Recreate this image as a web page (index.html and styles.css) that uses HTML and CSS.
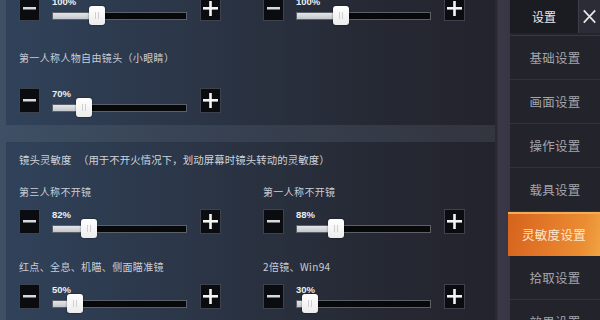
FILE: index.html
```html
<!DOCTYPE html>
<html lang="zh">
<head>
<meta charset="utf-8">
<title>设置</title>
<link rel="stylesheet" href="styles.css">
</head>
<body>
<div class="app">
  <main class="main">
    <section class="panel panel-top">
      <div class="grid grid-first">
        <div class="ctrl">
          <div class="btn"><svg viewBox="0 0 21 25"><rect x="4" y="11" width="13" height="2.5" fill="#d9dadc"/></svg></div>
          <div class="slider"><div class="pct">100%</div><div class="track"><div class="fill" style="width:33.3%"></div><div class="thumb" style="left:33.3%"></div></div></div>
          <div class="btn"><svg viewBox="0 0 21 25"><rect x="3" y="11" width="15" height="2.6" fill="#f4f4f4"/><rect x="9.2" y="5" width="2.6" height="15" fill="#f4f4f4"/></svg></div>
        </div>
        <div class="ctrl">
          <div class="btn"><svg viewBox="0 0 21 25"><rect x="4" y="11" width="13" height="2.5" fill="#d9dadc"/></svg></div>
          <div class="slider"><div class="pct">100%</div><div class="track"><div class="fill" style="width:33.3%"></div><div class="thumb" style="left:33.3%"></div></div></div>
          <div class="btn"><svg viewBox="0 0 21 25"><rect x="3" y="11" width="15" height="2.6" fill="#f4f4f4"/><rect x="9.2" y="5" width="2.6" height="15" fill="#f4f4f4"/></svg></div>
        </div>
      </div>
      <div class="title solo">第一人称人物自由镜头（小眼睛）</div>
      <div class="grid grid-solo">
        <div class="ctrl">
          <div class="btn"><svg viewBox="0 0 21 25"><rect x="4" y="11" width="13" height="2.5" fill="#d9dadc"/></svg></div>
          <div class="slider"><div class="pct">70%</div><div class="track"><div class="fill" style="width:23.3%"></div><div class="thumb" style="left:23.3%"></div></div></div>
          <div class="btn"><svg viewBox="0 0 21 25"><rect x="3" y="11" width="15" height="2.6" fill="#f4f4f4"/><rect x="9.2" y="5" width="2.6" height="15" fill="#f4f4f4"/></svg></div>
        </div>
      </div>
    </section>

    <section class="panel panel-bottom">
      <div class="head">镜头灵敏度 <span class="paren">（用于不开火情况下，划动屏幕时镜头转动的灵敏度）</span></div>
      <div class="grid grid-main">
        <div class="setting">
          <div class="title">第三人称不开镜</div>
          <div class="ctrl">
            <div class="btn"><svg viewBox="0 0 21 25"><rect x="4" y="11" width="13" height="2.5" fill="#d9dadc"/></svg></div>
            <div class="slider"><div class="pct">82%</div><div class="track"><div class="fill" style="width:27.3%"></div><div class="thumb" style="left:27.3%"></div></div></div>
            <div class="btn"><svg viewBox="0 0 21 25"><rect x="3" y="11" width="15" height="2.6" fill="#f4f4f4"/><rect x="9.2" y="5" width="2.6" height="15" fill="#f4f4f4"/></svg></div>
          </div>
        </div>
        <div class="setting">
          <div class="title">第一人称不开镜</div>
          <div class="ctrl">
            <div class="btn"><svg viewBox="0 0 21 25"><rect x="4" y="11" width="13" height="2.5" fill="#d9dadc"/></svg></div>
            <div class="slider"><div class="pct">88%</div><div class="track"><div class="fill" style="width:29.3%"></div><div class="thumb" style="left:29.3%"></div></div></div>
            <div class="btn"><svg viewBox="0 0 21 25"><rect x="3" y="11" width="15" height="2.6" fill="#f4f4f4"/><rect x="9.2" y="5" width="2.6" height="15" fill="#f4f4f4"/></svg></div>
          </div>
        </div>
        <div class="setting">
          <div class="title">红点、全息、机瞄、侧面瞄准镜</div>
          <div class="ctrl">
            <div class="btn"><svg viewBox="0 0 21 25"><rect x="4" y="11" width="13" height="2.5" fill="#d9dadc"/></svg></div>
            <div class="slider"><div class="pct">50%</div><div class="track"><div class="fill" style="width:16.7%"></div><div class="thumb" style="left:16.7%"></div></div></div>
            <div class="btn"><svg viewBox="0 0 21 25"><rect x="3" y="11" width="15" height="2.6" fill="#f4f4f4"/><rect x="9.2" y="5" width="2.6" height="15" fill="#f4f4f4"/></svg></div>
          </div>
        </div>
        <div class="setting">
          <div class="title">2倍镜、Win94</div>
          <div class="ctrl">
            <div class="btn"><svg viewBox="0 0 21 25"><rect x="4" y="11" width="13" height="2.5" fill="#d9dadc"/></svg></div>
            <div class="slider"><div class="pct">30%</div><div class="track"><div class="fill" style="width:10%"></div><div class="thumb" style="left:10%"></div></div></div>
            <div class="btn"><svg viewBox="0 0 21 25"><rect x="3" y="11" width="15" height="2.6" fill="#f4f4f4"/><rect x="9.2" y="5" width="2.6" height="15" fill="#f4f4f4"/></svg></div>
          </div>
        </div>
      </div>
    </section>
  </main>

  <div class="rail"></div>

  <aside class="sidebar">
    <div class="side-head">
      <div class="tab">设置</div>
      <div class="close"><svg viewBox="0 0 22 33"><path d="M5 10 L17 23 M17 10 L5 23" stroke="#e6e6e8" stroke-width="1.8" fill="none"/></svg></div>
    </div>
    <ul class="menu">
      <li class="item">基础设置</li>
      <li class="item">画面设置</li>
      <li class="item">操作设置</li>
      <li class="item">载具设置</li>
      <li class="item active">灵敏度设置</li>
      <li class="item">拾取设置</li>
      <li class="item">效果设置</li>
    </ul>
  </aside>
</div>
</body>
</html>
```

FILE: styles.css
```css
* { box-sizing: border-box; }

html, body {
  margin: 0;
  padding: 0;
  width: 600px;
  height: 320px;
  overflow: hidden;
  background: #24242c;
  font-family: "Noto Sans CJK SC", "Noto Sans", sans-serif;
}

.app {
  display: flex;
  width: 600px;
  height: 320px;
  overflow: hidden;
}

/* ---------- main settings column ---------- */
.main {
  width: 495px;
  flex: none;
  padding-left: 6px;
  display: flex;
  flex-direction: column;
  background: linear-gradient(90deg, #3e5064 0%, #374152 45%, #33353f 100%);
  overflow: hidden;
}

.panel {
  flex: none;
  padding-left: 13px;
  background:
    linear-gradient(90deg, #30425a 0%, #2b3546 40%, #262a35 72%, #23232c 100%);
}

.panel-top {
  height: 125px;
}

.panel-bottom {
  margin-top: 17px;
  flex: 1;
  padding-top: 11px;
}

.grid {
  display: grid;
  grid-template-columns: 202px 202px;
  column-gap: 42px;
}

.grid-first { margin-top: -4px; }
.grid-solo { margin-top: 23px; }
.grid-main { margin-top: 18px; row-gap: 26px; }

.title {
  font-size: 10px;
  line-height: 14px;
  letter-spacing: 0.35px;
  color: #c9ced6;
  margin-bottom: 10px;
  white-space: nowrap;
}

.title.solo {
  margin: 30px 0 0 0;
}

.head {
  font-size: 10.4px;
  line-height: 14px;
  letter-spacing: 0.1px;
  color: #cfd3da;
  white-space: nowrap;
}

.head .paren { margin-left: 4px; }

/* ---------- slider control ---------- */
.ctrl {
  display: flex;
  align-items: flex-start;
  height: 25px;
}

.btn {
  width: 21px;
  height: 25px;
  flex: none;
  background: #0b0c10;
  border: 1px solid #3d424c;
}

.btn svg {
  display: block;
  width: 100%;
  height: 100%;
  margin: -1px;
  width: 21px;
  height: 25px;
}

.slider {
  width: 135px;
  flex: none;
  margin: 0 13px 0 12px;
  display: flex;
  flex-direction: column;
}

.pct {
  font-family: "Liberation Sans", Arial, sans-serif;
  font-weight: bold;
  font-size: 9.5px;
  line-height: 11px;
  height: 11px;
  color: #eceef0;
}

.track {
  position: relative;
  margin-top: 5px;
  height: 8px;
  background: #07080a;
  border: 1px solid #5b6069;
}

.fill {
  height: 100%;
  background: linear-gradient(180deg, #e4e6e9 0%, #c3c6cb 100%);
}

.thumb {
  position: absolute;
  top: -7px;
  width: 16px;
  height: 19px;
  margin-left: -8px;
  background: linear-gradient(180deg, #ffffff 0%, #ececec 100%);
  border-radius: 3px;
  box-shadow: 0 0 2px rgba(0, 0, 0, 0.6);
}

.thumb::after {
  content: "";
  position: absolute;
  left: 6px;
  top: 6px;
  width: 2px;
  height: 7px;
  border-left: 1px solid #cfcfcf;
  border-right: 1px solid #cfcfcf;
}

/* ---------- rail ---------- */
.rail {
  width: 15px;
  flex: none;
  background: linear-gradient(90deg, #2a2a34 0, #2a2a34 2px, #3b3948 3px, #38364477 100%);
  background-color: #383644;
}

/* ---------- sidebar ---------- */
.sidebar {
  width: 90px;
  flex: none;
  background: #24242c;
  display: flex;
  flex-direction: column;
}

.side-head {
  display: flex;
  height: 33px;
  flex: none;
}

.tab {
  width: 68px;
  background: #1b1c22;
  color: #e8e9ec;
  font-size: 12px;
  line-height: 33px;
  text-align: center;
}

.close {
  width: 22px;
  background: #2b2c35;
  border-left: 1px solid #3e3f4a;
}

.close svg {
  display: block;
  width: 21px;
  height: 33px;
}

.menu {
  list-style: none;
  margin: 2px 0 0 0;
  padding: 0;
  border-top: 1px solid #383842;
}

.item {
  height: 44px;
  line-height: 43px;
  text-align: center;
  font-size: 12.5px;
  letter-spacing: 0.3px;
  color: #a3a5ae;
  background: #23232b;
  border-bottom: 1px solid #33333d;
  white-space: nowrap;
}

.item.active {
  margin-left: -2px;
  color: #fde8cf;
  border-top: 2px solid #f4ad56;
  border-bottom: none;
  line-height: 42px;
  background: linear-gradient(100deg, #d5631c 0%, #e47a2a 45%, #eb8d33 80%, #f0a343 100%);
}
```
